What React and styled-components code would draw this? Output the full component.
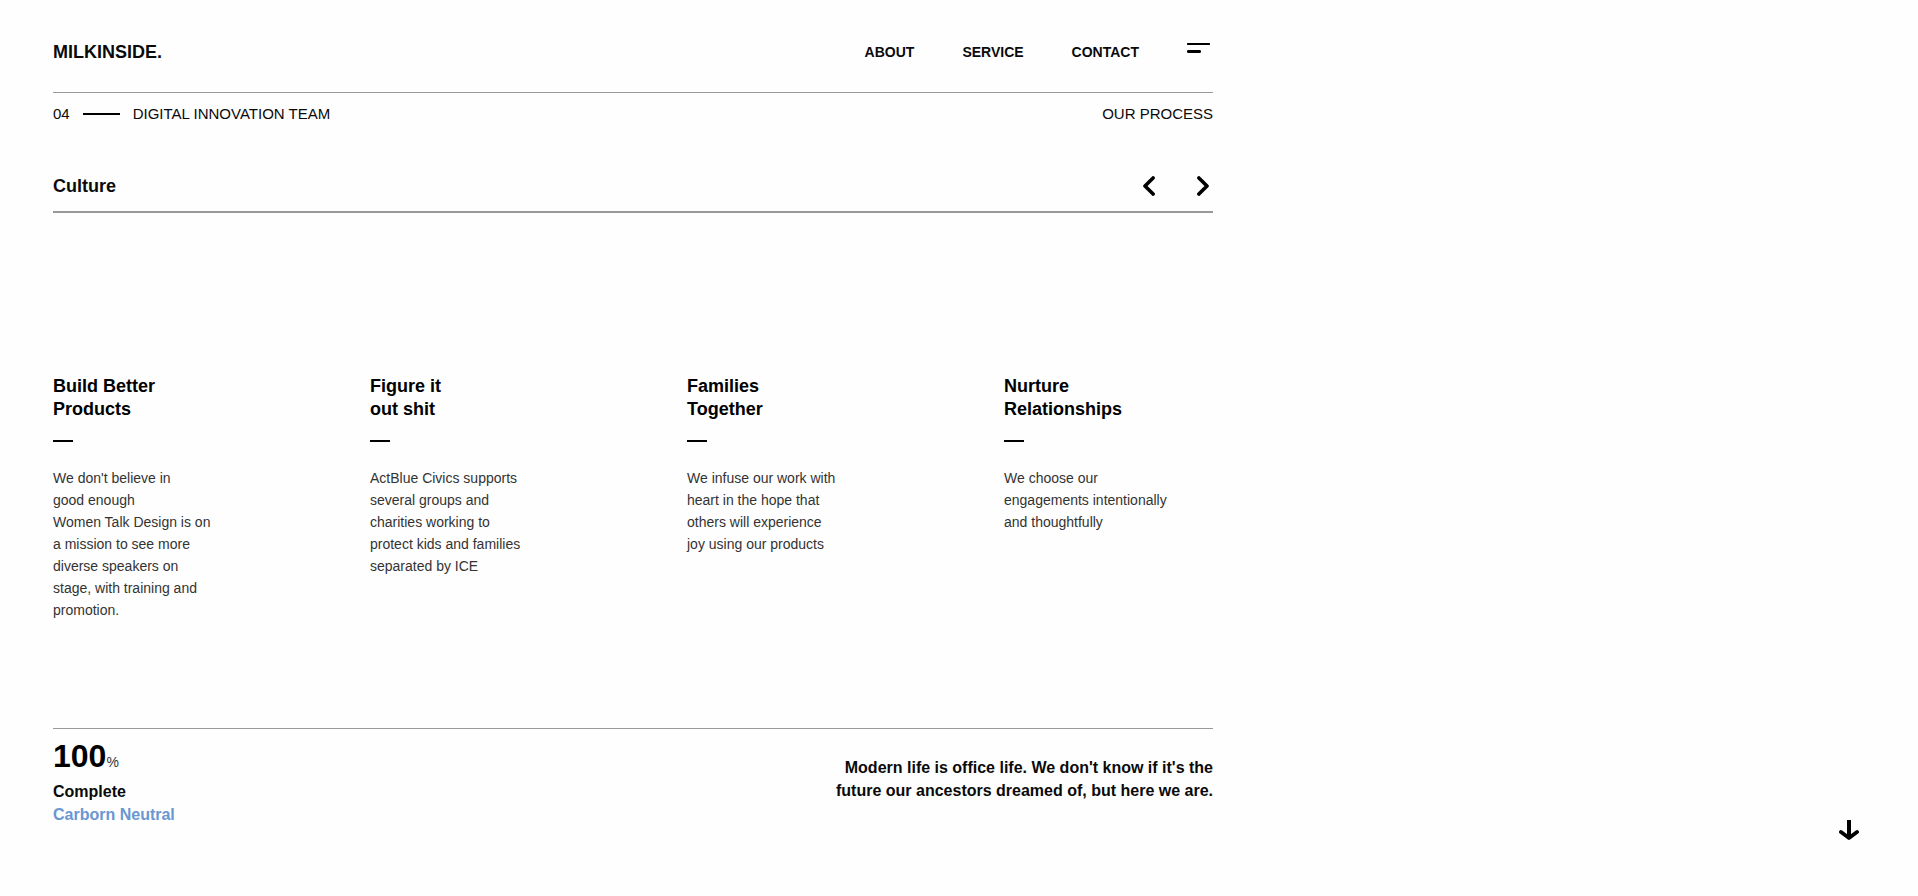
import React from "react";
import styled, { createGlobalStyle } from "styled-components";

const GlobalStyle = createGlobalStyle`
  *, *::before, *::after { box-sizing: border-box; }
  body {
    margin: 0;
    background: #fefefe;
    color: #0a0a0a;
    font-family: "Liberation Sans", Arial, Helvetica, sans-serif;
  }
  h1, h2, h3, p { margin: 0; }
  a { color: inherit; text-decoration: none; }
`;

const Page = styled.div`
  max-width: 1266px;
  padding: 0 53px;
`;

const Header = styled.header`
  display: flex;
  align-items: center;
  justify-content: space-between;
  height: 92px;
  padding-bottom: 12px;
  padding-top: 24px;
`;

const Logo = styled.a`
  font-size: 18px;
  font-weight: 700;
  line-height: 24px;
`;

const Nav = styled.nav`
  display: flex;
  align-items: center;
  gap: 48px;
`;

const NavLink = styled.a`
  font-size: 14px;
  font-weight: 700;
  line-height: 24px;
`;

const IconButton = styled.button`
  display: flex;
  padding: 0;
  border: 0;
  background: none;
  color: #000;
  cursor: pointer;
`;

const MenuButton = styled(IconButton)`
  padding: 0 3px 8px 0;
`;

const Rule = styled.hr`
  margin: 0;
  border: 0;
  height: ${(p) => p.$thickness || 1}px;
  background: #999;
`;

const Meta = styled.div`
  display: flex;
  align-items: center;
  justify-content: space-between;
  padding-top: 12px;
  font-size: 15px;
  line-height: 18px;
`;

const MetaLabel = styled.div`
  display: flex;
  align-items: center;
  gap: 13px;
`;

const Dash = styled.span`
  display: block;
  width: ${(p) => p.$width}px;
  height: 2px;
  background: #000;
`;

const TitleRow = styled.div`
  display: flex;
  align-items: center;
  justify-content: space-between;
  padding: 52px 0 13px;
`;

const Title = styled.h1`
  font-size: 18px;
  line-height: 23px;
`;

const Arrows = styled.div`
  display: flex;
  gap: 42px;
  padding: 0 4px 2px 0;
`;

const Columns = styled.main`
  display: grid;
  grid-template-columns: repeat(4, 1fr);
  column-gap: 108px;
  min-height: 515px;
  padding: 162px 0 80px;
`;

const Heading = styled.h2`
  max-width: 130px;
  margin-bottom: 19px;
  color: #000;
  font-size: 18px;
  line-height: 23px;
`;

const Copy = styled.p`
  margin-top: 25px;
  color: #333;
  font-size: 14px;
  line-height: 22px;
`;

const Line = styled.span`
  display: block;
`;

const Footer = styled.footer`
  display: flex;
  justify-content: space-between;
  padding: 9px 0 40px;
  font-size: 16px;
  font-weight: 700;
  line-height: 23px;
`;

const Figure = styled.p`
  color: #000;
  font-size: 32px;
  line-height: 36px;
`;

const Unit = styled.span`
  color: #333;
  font-size: 14px;
  font-weight: 400;
`;

const Highlight = styled.a`
  color: #6a96d2;
`;

const Quote = styled.p`
  padding-top: 18px;
  text-align: right;
`;

const ScrollButton = styled(IconButton)`
  position: fixed;
  right: 59px;
  bottom: 56px;
`;

const columns = [
  {
    heading: ["Build Better", "Products"],
    copy: [
      "We don't believe in",
      "good enough",
      "Women Talk Design is on",
      "a mission to see more",
      "diverse speakers on",
      "stage, with training and",
      "promotion.",
    ],
  },
  {
    heading: ["Figure it", "out shit"],
    copy: [
      "ActBlue Civics supports",
      "several groups and",
      "charities working to",
      "protect kids and families",
      "separated by ICE",
    ],
  },
  {
    heading: ["Families", "Together"],
    copy: [
      "We infuse our work with",
      "heart in the hope that",
      "others will experience",
      "joy using our products",
    ],
  },
  {
    heading: ["Nurture", "Relationships"],
    copy: ["We choose our", "engagements intentionally", "and thoughtfully"],
  },
];

const Lines = ({ items }) => items.map((text) => <Line key={text}>{text}</Line>);

const Chevron = ({ points }) => (
  <svg width="12" height="20" viewBox="0 0 12 20" fill="none" stroke="currentColor" strokeWidth="3.6" strokeLinecap="round" strokeLinejoin="round">
    <polyline points={points} />
  </svg>
);

export default function App() {
  return (
    <>
      <GlobalStyle />
      <Page>
        <Header>
          <Logo href="#">MILKINSIDE.</Logo>
          <Nav>
            <NavLink href="#about">ABOUT</NavLink>
            <NavLink href="#service">SERVICE</NavLink>
            <NavLink href="#contact">CONTACT</NavLink>
            <MenuButton type="button" aria-label="Menu">
              <svg width="23" height="10" viewBox="0 0 23 10">
                <rect width="23" height="2" rx="0.6" />
                <rect y="7" width="14" height="3" rx="1.2" />
              </svg>
            </MenuButton>
          </Nav>
        </Header>
        <Rule />
        <Meta>
          <MetaLabel>
            <span>04</span>
            <Dash $width={37} />
            <span>DIGITAL INNOVATION TEAM</span>
          </MetaLabel>
          <span>OUR PROCESS</span>
        </Meta>
        <TitleRow>
          <Title>Culture</Title>
          <Arrows>
            <IconButton type="button" aria-label="Previous">
              <Chevron points="10.1,1.9 2,10 10.1,18.1" />
            </IconButton>
            <IconButton type="button" aria-label="Next">
              <Chevron points="1.9,1.9 10,10 1.9,18.1" />
            </IconButton>
          </Arrows>
        </TitleRow>
        <Rule $thickness={2} />
        <Columns>
          {columns.map(({ heading, copy }) => (
            <section key={heading[0]}>
              <Heading>
                <Lines items={heading} />
              </Heading>
              <Dash $width={20} />
              <Copy>
                <Lines items={copy} />
              </Copy>
            </section>
          ))}
        </Columns>
        <Rule />
        <Footer>
          <div>
            <Figure>
              100<Unit>%</Unit>
            </Figure>
            <p>Complete</p>
            <Highlight href="#carbon">Carborn Neutral</Highlight>
          </div>
          <Quote>
            <Line>Modern life is office life. We don't know if it's the</Line>
            <Line>future our ancestors dreamed of, but here we are.</Line>
          </Quote>
        </Footer>
      </Page>
      <ScrollButton type="button" aria-label="Scroll down">
        <svg width="20" height="20" viewBox="0 0 20 20" fill="none" stroke="currentColor" strokeWidth="4">
          <path d="M10 0v18" />
          <path d="M2 12l8 6 8-6" strokeWidth="3.8" strokeLinecap="round" strokeLinejoin="round" />
        </svg>
      </ScrollButton>
    </>
  );
}
